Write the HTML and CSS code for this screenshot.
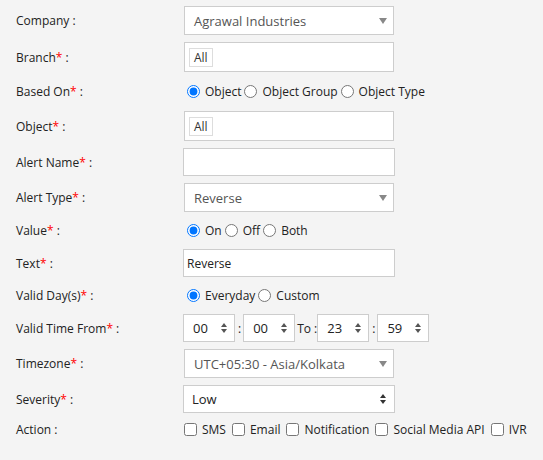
FILE: index.html
```html
<!DOCTYPE html>
<html lang="en">
<head>
    <meta charset="UTF-8">
    <title>Alert</title>
    <link rel="stylesheet" href="styles.css">
</head>
<body>
    <form class="alert-form">
        <div class="row">
            <label class="lbl">Company :</label>
            <div class="select wide"><span>Agrawal Industries</span><svg class="caret" width="8" height="6" viewBox="0 0 8 6"><path d="M0 0h8L4 6z"/></svg></div>
        </div>
        <div class="row">
            <label class="lbl">Branch<span class="req">*</span> :</label>
            <div class="tagbox"><span class="tag">All</span></div>
        </div>
        <div class="row choice first">
            <label class="lbl">Based On<span class="req">*</span> :</label>
            <div class="opts">
                <label class="opt"><input type="radio" name="based" checked>Object</label>
                <label class="opt"><input type="radio" name="based">Object Group</label>
                <label class="opt"><input type="radio" name="based">Object Type</label>
            </div>
        </div>
        <div class="row">
            <label class="lbl">Object<span class="req">*</span> :</label>
            <div class="tagbox"><span class="tag">All</span></div>
        </div>
        <div class="row">
            <label class="lbl">Alert Name<span class="req">*</span> :</label>
            <input class="text" type="text">
        </div>
        <div class="row">
            <label class="lbl">Alert Type<span class="req">*</span> :</label>
            <div class="select wide"><span>Reverse</span><svg class="caret" width="8" height="6" viewBox="0 0 8 6"><path d="M0 0h8L4 6z"/></svg></div>
        </div>
        <div class="row choice">
            <label class="lbl">Value<span class="req">*</span> :</label>
            <div class="opts">
                <label class="opt"><input type="radio" name="value" checked>On</label>
                <label class="opt"><input type="radio" name="value">Off</label>
                <label class="opt"><input type="radio" name="value">Both</label>
            </div>
        </div>
        <div class="row">
            <label class="lbl">Text<span class="req">*</span> :</label>
            <input class="text" type="text" value="Reverse">
        </div>
        <div class="row choice">
            <label class="lbl">Valid Day(s)<span class="req">*</span> :</label>
            <div class="opts">
                <label class="opt"><input type="radio" name="days" checked>Everyday</label>
                <label class="opt"><input type="radio" name="days">Custom</label>
            </div>
        </div>
        <div class="row">
            <label class="lbl">Valid Time From<span class="req">*</span> :</label>
            <div class="times">
                <div class="select time"><span>00</span><svg class="updown" width="6" height="10" viewBox="0 0 6 10"><path d="M0 4L3 0L6 4zM0 6h6L3 10z"/></svg></div>
                <span class="sep">:</span>
                <div class="select time"><span>00</span><svg class="updown" width="6" height="10" viewBox="0 0 6 10"><path d="M0 4L3 0L6 4zM0 6h6L3 10z"/></svg></div>
                <span class="sep to">To :</span>
                <div class="select time"><span>23</span><svg class="updown" width="6" height="10" viewBox="0 0 6 10"><path d="M0 4L3 0L6 4zM0 6h6L3 10z"/></svg></div>
                <span class="sep">:</span>
                <div class="select time"><span>59</span><svg class="updown" width="6" height="10" viewBox="0 0 6 10"><path d="M0 4L3 0L6 4zM0 6h6L3 10z"/></svg></div>
            </div>
        </div>
        <div class="row">
            <label class="lbl">Timezone<span class="req">*</span> :</label>
            <div class="select wide"><span>UTC+05:30 - Asia/Kolkata</span><svg class="caret" width="8" height="6" viewBox="0 0 8 6"><path d="M0 0h8L4 6z"/></svg></div>
        </div>
        <div class="row">
            <label class="lbl">Severity<span class="req">*</span> :</label>
            <div class="select full"><span>Low</span><svg class="updown dark" width="6" height="10" viewBox="0 0 6 10"><path d="M0 4L3 0L6 4zM0 6h6L3 10z"/></svg></div>
        </div>
        <div class="row action">
            <label class="lbl">Action :</label>
            <div class="opts checks">
                <label class="opt"><input type="checkbox">SMS</label>
                <label class="opt"><input type="checkbox">Email</label>
                <label class="opt"><input type="checkbox">Notification</label>
                <label class="opt"><input type="checkbox">Social Media API</label>
                <label class="opt"><input type="checkbox">IVR</label>
            </div>
        </div>
    </form>
</body>
</html>
```

FILE: styles.css
```css
* {
    box-sizing: border-box;
    margin: 0;
    padding: 0;
}

body {
    font-family: "Open Sans", "Liberation Sans", sans-serif;
    font-size: 12px;
    color: #222;
    background-color: #f4f4f4;
}

.alert-form {
    display: flex;
    flex-direction: column;
    gap: 7px;
    padding: 6px 0 0 16px;
}

.row {
    display: flex;
    align-items: center;
}

.row.choice {
    height: 23px;
}

.row.choice.first {
    height: 25px;
}

.row.action {
    height: 18px;
}

.lbl {
    width: 167px;
    flex-shrink: 0;
}

.req {
    color: #f00;
}

.select {
    display: flex;
    align-items: center;
    justify-content: space-between;
    height: 28px;
    background: #fff;
    border: 1px solid #cdcdcd;
    font-size: 13px;
    color: #555;
}

.select.wide {
    width: 210px;
    height: 29px;
    margin-left: 1px;
    padding: 0 6px 0 9px;
}

.select.full {
    width: 212px;
    padding: 0 8px 0 8px;
    color: #222;
}

.caret {
    fill: #888;
}

.updown {
    fill: #555;
}

.updown.dark {
    fill: #333;
}

.tagbox {
    display: flex;
    align-items: center;
    width: 210px;
    height: 30px;
    margin-left: 1px;
    padding: 0 4px;
    background: #fff;
    border: 1px solid #cdcdcd;
}

.tag {
    display: inline-flex;
    align-items: center;
    height: 19px;
    padding: 0 4px;
    border: 1px solid #ddd;
    font-size: 12px;
    color: #333;
}

.text {
    width: 212px;
    height: 28px;
    padding: 0 3px;
    border: 1px solid #cdcdcd;
    background: #fff;
    font-family: inherit;
    font-size: 12px;
    color: #222;
    outline: none;
}

.opts {
    display: flex;
    align-items: center;
    gap: 3px;
    padding-left: 4px;
}

.opt {
    display: flex;
    align-items: center;
}

.opt input {
    width: 13px;
    height: 13px;
    margin: 0 5px 0 0;
}

.checks {
    padding-left: 1px;
    gap: 6px;
}

.checks .opt input {
    width: 13px;
    height: 13px;
    margin-right: 5px;
}

.times {
    display: flex;
    align-items: center;
}

.select.time {
    width: 52px;
    padding: 0 7px 0 9px;
    color: #222;
}

.sep {
    padding: 0 2px 0 3px;
}

.sep.to {
    padding: 0 0 0 2px;
}
```
